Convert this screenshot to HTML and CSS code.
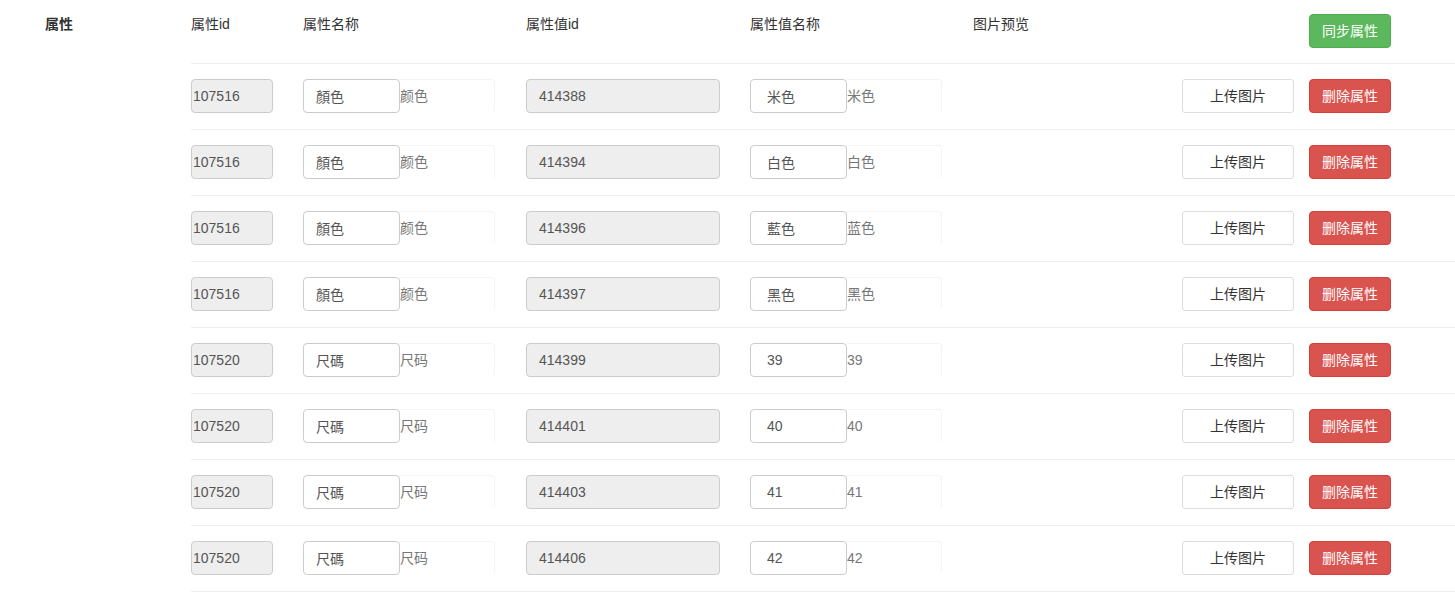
FILE: index.html
```html
<!DOCTYPE html>
<html lang="zh">
<head>
<meta charset="utf-8">
<title>属性</title>
<link rel="stylesheet" href="styles.css">
</head>
<body>
<div class="attr-group">
  <div class="attr-label">属性</div>
  <div class="attr-body">
    <div class="row head">
      <div class="th">属性id</div>
      <div class="th">属性名称</div>
      <div class="th">属性值id</div>
      <div class="th">属性值名称</div>
      <div class="th">图片预览</div>
      <div></div>
      <div><button class="btn btn-green">同步属性</button></div>
    </div>

    <div class="row">
      <div><input class="ctl ctl-ro ctl-id" value="107516" readonly></div>
      <div class="pair"><input class="ctl ctl-name" value="顏色"><span class="addon">颜色</span></div>
      <div><input class="ctl ctl-ro ctl-vid" value="414388" readonly></div>
      <div class="pair"><input class="ctl ctl-name ctl-vname" value="米色"><span class="addon">米色</span></div>
      <div></div>
      <div><button class="btn btn-white">上传图片</button></div>
      <div><button class="btn btn-red">删除属性</button></div>
    </div>

    <div class="row">
      <div><input class="ctl ctl-ro ctl-id" value="107516" readonly></div>
      <div class="pair"><input class="ctl ctl-name" value="顏色"><span class="addon">颜色</span></div>
      <div><input class="ctl ctl-ro ctl-vid" value="414394" readonly></div>
      <div class="pair"><input class="ctl ctl-name ctl-vname" value="白色"><span class="addon">白色</span></div>
      <div></div>
      <div><button class="btn btn-white">上传图片</button></div>
      <div><button class="btn btn-red">删除属性</button></div>
    </div>

    <div class="row">
      <div><input class="ctl ctl-ro ctl-id" value="107516" readonly></div>
      <div class="pair"><input class="ctl ctl-name" value="顏色"><span class="addon">颜色</span></div>
      <div><input class="ctl ctl-ro ctl-vid" value="414396" readonly></div>
      <div class="pair"><input class="ctl ctl-name ctl-vname" value="藍色"><span class="addon">蓝色</span></div>
      <div></div>
      <div><button class="btn btn-white">上传图片</button></div>
      <div><button class="btn btn-red">删除属性</button></div>
    </div>

    <div class="row">
      <div><input class="ctl ctl-ro ctl-id" value="107516" readonly></div>
      <div class="pair"><input class="ctl ctl-name" value="顏色"><span class="addon">颜色</span></div>
      <div><input class="ctl ctl-ro ctl-vid" value="414397" readonly></div>
      <div class="pair"><input class="ctl ctl-name ctl-vname" value="黑色"><span class="addon">黑色</span></div>
      <div></div>
      <div><button class="btn btn-white">上传图片</button></div>
      <div><button class="btn btn-red">删除属性</button></div>
    </div>

    <div class="row">
      <div><input class="ctl ctl-ro ctl-id" value="107520" readonly></div>
      <div class="pair"><input class="ctl ctl-name" value="尺碼"><span class="addon">尺码</span></div>
      <div><input class="ctl ctl-ro ctl-vid" value="414399" readonly></div>
      <div class="pair"><input class="ctl ctl-name ctl-vname" value="39"><span class="addon">39</span></div>
      <div></div>
      <div><button class="btn btn-white">上传图片</button></div>
      <div><button class="btn btn-red">删除属性</button></div>
    </div>

    <div class="row">
      <div><input class="ctl ctl-ro ctl-id" value="107520" readonly></div>
      <div class="pair"><input class="ctl ctl-name" value="尺碼"><span class="addon">尺码</span></div>
      <div><input class="ctl ctl-ro ctl-vid" value="414401" readonly></div>
      <div class="pair"><input class="ctl ctl-name ctl-vname" value="40"><span class="addon">40</span></div>
      <div></div>
      <div><button class="btn btn-white">上传图片</button></div>
      <div><button class="btn btn-red">删除属性</button></div>
    </div>

    <div class="row">
      <div><input class="ctl ctl-ro ctl-id" value="107520" readonly></div>
      <div class="pair"><input class="ctl ctl-name" value="尺碼"><span class="addon">尺码</span></div>
      <div><input class="ctl ctl-ro ctl-vid" value="414403" readonly></div>
      <div class="pair"><input class="ctl ctl-name ctl-vname" value="41"><span class="addon">41</span></div>
      <div></div>
      <div><button class="btn btn-white">上传图片</button></div>
      <div><button class="btn btn-red">删除属性</button></div>
    </div>

    <div class="row">
      <div><input class="ctl ctl-ro ctl-id" value="107520" readonly></div>
      <div class="pair"><input class="ctl ctl-name" value="尺碼"><span class="addon">尺码</span></div>
      <div><input class="ctl ctl-ro ctl-vid" value="414406" readonly></div>
      <div class="pair"><input class="ctl ctl-name ctl-vname" value="42"><span class="addon">42</span></div>
      <div></div>
      <div><button class="btn btn-white">上传图片</button></div>
      <div><button class="btn btn-red">删除属性</button></div>
    </div>
  </div>
</div>
</body>
</html>
```

FILE: styles.css
```css
* { box-sizing: border-box; }
html, body { margin: 0; padding: 0; background: #fff; }
body {
  font-family: "Liberation Sans", "Noto Sans CJK SC", sans-serif;
  font-size: 14px;
  line-height: 20px;
  color: #333;
  width: 1455px;
  overflow: hidden;
}
.attr-group {
  display: flex;
  align-items: flex-start;
}
.attr-label {
  width: 191px;
  flex: 0 0 191px;
  padding-left: 45px;
  padding-top: 14px;
  font-weight: bold;
}
.attr-body {
  flex: 1;
}
.row {
  display: grid;
  grid-template-columns: 112px 223px 224px 223px 209px 127px 1fr;
  align-items: start;
  padding: 15px 0 16px;
  border-bottom: 1px solid #eee;
}
.row.head {
  padding: 14px 0 15px;
}
.th {
  line-height: 20px;
}
.ctl {
  display: block;
  height: 34px;
  font-family: inherit;
  font-size: 14px;
  color: #555;
  border: 1px solid #ccc;
  border-radius: 4px;
  background: #fff;
  padding: 6px 12px;
  margin: 0;
  outline: none;
}
.ctl-ro { background: #eee; }
.ctl-id { width: 82px; padding-left: 1px; }
.ctl-vid { width: 194px; }
.ctl-name { width: 97px; position: relative; z-index: 1; }
.ctl-vname { padding-left: 16px; }
.pair {
  display: flex;
}
.addon {
  display: block;
  width: 96px;
  height: 34px;
  margin-left: -1px;
  padding: 6px 0 6px 1px;
  line-height: 20px;
  color: #777;
  border: 1px solid #f4f4f4;
  border-bottom-color: #fff;
  border-left: none;
  border-radius: 0 4px 4px 0;
}
.btn {
  display: block;
  height: 34px;
  font-family: inherit;
  font-size: 14px;
  line-height: 20px;
  padding: 6px 12px;
  border-radius: 4px;
  border: 1px solid transparent;
  margin: 0;
  cursor: pointer;
}
.btn-green { width: 82px; background: #5cb85c; border-color: #4cae4c; color: #fff; }
.btn-red { width: 82px; background: #d9534f; border-color: #d43f3a; color: #fff; }
.btn-white { width: 112px; background: #fff; border-color: #ddd; color: #333; border-radius: 3px; }
```
